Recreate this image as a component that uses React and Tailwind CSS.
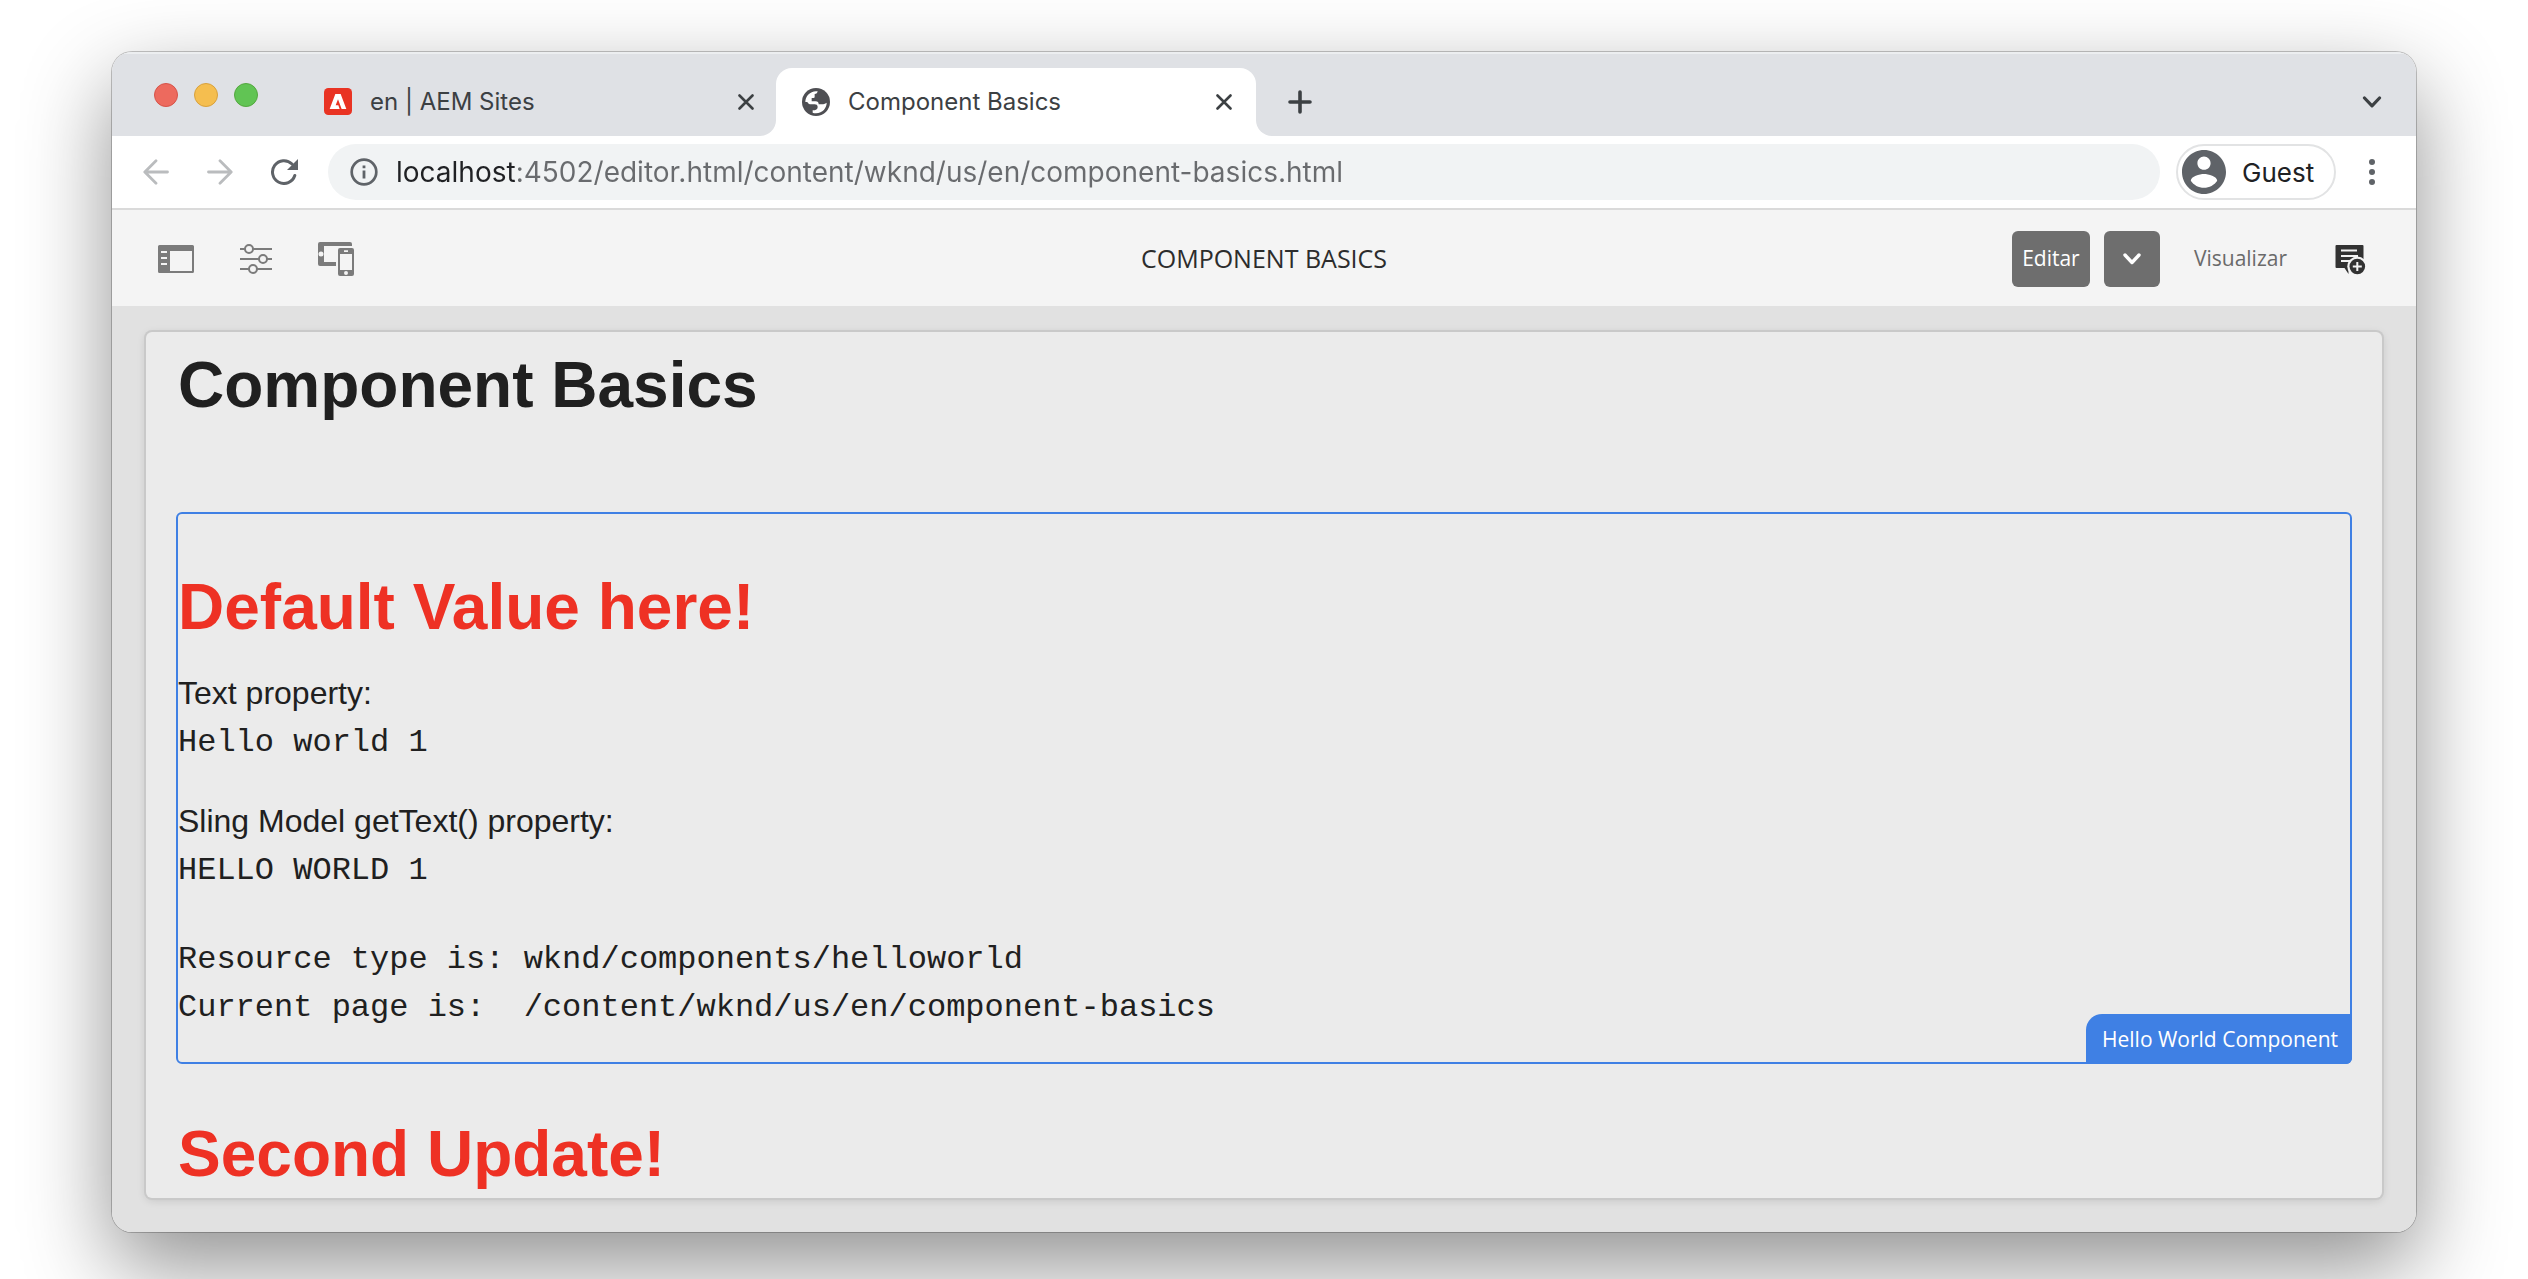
function CloseIcon() {
  return (
    <svg className="size-4" viewBox="0 0 16 16" fill="none" stroke="#3c4043" strokeWidth="2.6" strokeLinecap="round" aria-hidden="true">
      <path d="M1.5 1.5l13 13M14.5 1.5l-13 13" />
    </svg>
  );
}

function AdobeIcon() {
  return (
    <svg className="size-7 shrink-0" viewBox="0 0 84 84" aria-hidden="true">
      <rect y="0" width="84" height="81" rx="13" fill="#e93323" />
      <path fill="#fff" d="M17 63 34 18h16l17 45H53L42 34l-7 18h8l4 11z" />
    </svg>
  );
}

function GlobeIcon() {
  return (
    <svg className="size-7 shrink-0" viewBox="0 0 84 84" aria-hidden="true">
      <circle cx="42" cy="42" r="42" fill="#4e4f53" />
      <path fill="#fff" d="M10 42C10 24 24 10 42 9.500l5 .5c-1 5-3 8-9 8v8c0 3-2 4-6 4h-3v10h12c6 0 9 4 9 9h10c5 0 8-2 14-5C74 60 62 75 42 75.500c-4 0-7-.5-10-1.500v-7c10 0 15-3 15-10 0-6-4-8-9-8H27c-5 0-9-3-11-7z" />
    </svg>
  );
}

function ArrowIcon({ flip }) {
  return (
    <svg className={flip ? "size-[26px] -scale-x-100" : "size-[26px]"} viewBox="0 0 26 26" fill="none" stroke="#babcbe" strokeWidth="2.8" strokeLinecap="round" strokeLinejoin="round" aria-hidden="true">
      <path d="M24.500 13H2M13 1.800 1.800 13 13 24.200" />
    </svg>
  );
}

function ReloadIcon() {
  return (
    <svg className="h-[26px] w-[27px]" viewBox="0 0 27 26" aria-hidden="true">
      <path d="M23.800 16.500A11.400 11.400 0 1 1 21 5" fill="none" stroke="#5f6368" strokeWidth="3" strokeLinecap="round" />
      <path d="M27 0v11H16z" fill="#5f6368" />
    </svg>
  );
}

function InfoIcon() {
  return (
    <svg className="size-7 shrink-0" viewBox="0 0 28 28" aria-hidden="true">
      <circle cx="14" cy="14" r="12.300" fill="none" stroke="#5f6368" strokeWidth="2.700" />
      <path d="M12.600 7.500h2.800v2.800h-2.800zM12.600 12.500h2.800v8h-2.800z" fill="#5f6368" />
    </svg>
  );
}

function AvatarIcon() {
  return (
    <svg className="size-11 shrink-0" viewBox="2 2 20 20" fill="#5f6368" aria-hidden="true">
      <path d="M12 2C6.480 2 2 6.480 2 12s4.480 10 10 10 10-4.480 10-10S17.520 2 12 2zm0 3c1.660 0 3 1.340 3 3s-1.340 3-3 3-3-1.340-3-3 1.340-3 3-3zm0 14.200c-2.500 0-4.710-1.280-6-3.220.03-1.990 4-3.080 6-3.080 1.990 0 5.970 1.090 6 3.080-1.290 1.940-3.500 3.220-6 3.220z" />
    </svg>
  );
}

function SidePanelIcon() {
  return (
    <svg className="h-7 w-9" viewBox="0 0 36 28" aria-hidden="true">
      <path fill="#7b7b7b" fillRule="evenodd" d="M1.500 0h33A1.500 1.500 0 0 1 36 1.500v25a1.500 1.500 0 0 1-1.500 1.500h-33A1.500 1.500 0 0 1 0 26.500v-25A1.500 1.500 0 0 1 1.500 0zM12 6v20h22V6zM3 6v2h6V6zm0 6v2h6v-2zm0 6v2h6v-2z" />
    </svg>
  );
}

function SlidersIcon() {
  return (
    <svg className="h-[30px] w-8" viewBox="0 0 32 30" fill="none" stroke="#7b7b7b" strokeWidth="2" aria-hidden="true">
      <path d="M0 5h5M13 5h19M0 15h19M27 15h5M0 25h9M17 25h15" />
      <circle cx="9" cy="5" r="4" />
      <circle cx="23" cy="15" r="4" />
      <circle cx="13" cy="25" r="4" />
    </svg>
  );
}

function DevicesIcon() {
  return (
    <svg className="h-[34px] w-9" viewBox="0 0 36 34" fill="#7b7b7b" fillRule="evenodd" aria-hidden="true">
      <path d="M2 0h30a2 2 0 0 1 2 2v2H6v16h12v4H2a2 2 0 0 1-2-2V2a2 2 0 0 1 2-2zm1 9.500a2.500 2.500 0 1 0 0 5 2.500 2.500 0 0 0 0-5z" />
      <path d="M22 6h12a2 2 0 0 1 2 2v24a2 2 0 0 1-2 2H22a2 2 0 0 1-2-2V8a2 2 0 0 1 2-2zm0 6v16h12V12zm4-3.800v1.800h4V8.200zm2 20.800a2 2 0 1 0 0 4 2 2 0 0 0 0-4z" />
    </svg>
  );
}

function AnnotateIcon() {
  return (
    <svg className="h-[31px] w-[31px]" viewBox="0 0 31 31" aria-hidden="true">
      <path d="M1.500 1h26A1 1 0 0 1 28.500 2v22h-15v6L9.500 24h-8a1 1 0 0 1-1-1V2a1 1 0 0 1 1-1z" fill="#323232" />
      <path d="M6 6.500h16M6 12h17M6 17h10" stroke="#f4f4f4" strokeWidth="2" />
      <circle cx="22.300" cy="22.500" r="10" fill="#f4f4f4" />
      <circle cx="22.300" cy="22.500" r="7.800" fill="#323232" />
      <path d="M22.300 18v9M17.800 22.500h9" stroke="#f4f4f4" strokeWidth="2" />
    </svg>
  );
}

function TabStrip() {
  return (
    <div className="flex h-[84px] bg-[#dfe1e5] text-2xl text-[#3c4043] shadow-[inset_0_2px_0_#eceef0]">
      <div className="flex items-center gap-4 pt-0.5 pl-[42px]">
        <button aria-label="Close window" className="size-6 rounded-full border border-[#d65349] bg-[#ed6a5e]" />
        <button aria-label="Minimize window" className="size-6 rounded-full border border-[#d8a13d] bg-[#f5be4f]" />
        <button aria-label="Zoom window" className="size-6 rounded-full border border-[#54a73f] bg-[#61c454]" />
      </div>
      <div className="flex grow items-stretch pt-4" role="tablist">
        <div className="flex w-[502px] items-center pr-1.5 pl-[66px]">
          <button role="tab" aria-selected="false" className="flex grow items-center gap-[18px]">
            <AdobeIcon />
            en | AEM Sites
          </button>
          <button aria-label="Close tab"><CloseIcon /></button>
        </div>
        <div className="size-4 self-end bg-white">
          <div className="size-4 rounded-br-2xl bg-[#dfe1e5]" />
        </div>
        <div className="flex w-[480px] items-center rounded-t-2xl bg-white pr-6 pl-[26px]">
          <button role="tab" aria-selected="true" className="flex grow items-center gap-[18px]">
            <GlobeIcon />
            Component Basics
          </button>
          <button aria-label="Close tab"><CloseIcon /></button>
        </div>
        <div className="size-4 self-end bg-white">
          <div className="size-4 rounded-bl-2xl bg-[#dfe1e5]" />
        </div>
        <button aria-label="New tab" className="ml-4">
          <svg className="size-6" viewBox="0 0 24 24" fill="none" stroke="#3c4043" strokeWidth="3.6" strokeLinecap="round" aria-hidden="true">
            <path d="M12 2v20M2 12h20" />
          </svg>
        </button>
        <button aria-label="Search tabs" className="mr-[34px] ml-auto">
          <svg className="h-3 w-5" viewBox="0 0 20 12" fill="none" stroke="#3c4043" strokeWidth="3.2" strokeLinecap="round" strokeLinejoin="round" aria-hidden="true">
            <path d="M2.500 2 10 9.800 17.500 2" />
          </svg>
        </button>
      </div>
    </div>
  );
}

function AddressBar() {
  return (
    <div className="flex items-center border-b-2 border-[#dadada] bg-white py-2 pr-[41px] pl-[31px]">
      <div className="flex items-center gap-[38px]">
        <button aria-label="Back"><ArrowIcon /></button>
        <button aria-label="Forward"><ArrowIcon flip /></button>
        <button aria-label="Reload"><ReloadIcon /></button>
      </div>
      <div className="ml-[30px] flex h-14 grow items-center gap-[18px] rounded-full bg-[#f1f3f4] pr-6 pl-[22px]">
        <InfoIcon />
        <input
          aria-label="Address"
          defaultValue="localhost:4502/editor.html/content/wknd/us/en/component-basics.html"
          className="h-10 min-w-0 grow bg-[linear-gradient(to_right,#202124_120px,#696b6e_120px)] bg-clip-text text-[28px] text-transparent caret-black outline-none"
        />
      </div>
      <button className="ml-4 flex h-14 w-40 items-center gap-4 rounded-full border-2 border-[#e2e3e4] pl-1 text-[26px] text-[#202124]">
        <AvatarIcon />
        Guest
      </button>
      <button aria-label="Menu" className="ml-[33px]">
        <svg className="h-7 w-1.5" viewBox="0 0 6 28" fill="#5f6368" aria-hidden="true">
          <circle cx="3" cy="4" r="3" />
          <circle cx="3" cy="14" r="3" />
          <circle cx="3" cy="24" r="3" />
        </svg>
      </button>
    </div>
  );
}

function EditorToolbar() {
  return (
    <header className="grid h-24 grid-cols-[1fr_auto_1fr] items-center bg-[#f4f4f4] px-[46px] pt-0.5 font-['Open_Sans','Noto_Sans',sans-serif] text-[21px]">
      <div className="flex items-center gap-[46px]">
        <button aria-label="Toggle side panel"><SidePanelIcon /></button>
        <button aria-label="Page information"><SlidersIcon /></button>
        <button aria-label="Emulator"><DevicesIcon /></button>
      </div>
      <h1 className="text-[25px] text-[#2c2c2c]">COMPONENT BASICS</h1>
      <div className="mr-1 flex items-center justify-end">
        <button className="h-14 w-[78px] rounded-md bg-[#6e6e6e] text-white">Editar</button>
        <button aria-label="Select mode" className="ml-3.5 flex h-14 w-14 items-center justify-center rounded-md bg-[#6e6e6e]">
          <svg className="h-3 w-5" viewBox="0 0 20 12" fill="none" stroke="#fff" strokeWidth="3.4" strokeLinecap="round" strokeLinejoin="round" aria-hidden="true">
            <path d="M3 2l7 7.500L17 2" />
          </svg>
        </button>
        <button className="ml-[34px] text-[#6a6a6a]">Visualizar</button>
        <button aria-label="Annotate" className="ml-12"><AnnotateIcon /></button>
      </div>
    </header>
  );
}

export default function App() {
  return (
    <div className="min-h-screen overflow-hidden bg-white px-28 pt-[52px] pb-[47px] font-['Inter',sans-serif]">
      <div className="overflow-hidden rounded-[20px] shadow-[0_0_0_1px_rgba(0,0,0,0.22),0_34px_88px_rgba(0,0,0,0.44)]">
        <TabStrip />
        <AddressBar />
        <EditorToolbar />
        <main className="bg-[#e1e1e1] px-[34px] pt-[26px] pb-[34px] font-['Liberation_Sans',Arial,sans-serif] text-[#202020]">
          <article className="rounded-md bg-[#ebebeb] px-[30px] pt-[13px] pb-1 shadow-[0_0_0_2px_#c9c9c9,0_2px_10px_rgba(0,0,0,0.14)]">
            <h2 className="px-0.5 text-[64px] leading-[80px] font-bold">Component Basics</h2>
            <section className="relative mt-[87px] rounded-md border-2 border-[#3f80e4] pt-[53px] pb-[30px] text-[32px] leading-[48px]">
              <h2 className="text-[64px] leading-[80px] font-bold text-[#ee3124]">Default Value here!</h2>
              <p className="mt-[22px]">Text property:</p>
              <pre className="mt-0.5 font-['Liberation_Mono',monospace]">Hello world 1</pre>
              <p className="mt-[30px]">Sling Model getText() property:</p>
              <pre className="mt-0.5 font-['Liberation_Mono',monospace]">HELLO WORLD 1</pre>
              <pre className="mt-[41px] font-['Liberation_Mono',monospace]">{"Resource type is: wknd/components/helloworld\nCurrent page is:  /content/wknd/us/en/component-basics"}</pre>
              <span className="absolute -right-0.5 -bottom-0.5 flex h-[50px] items-center rounded-tl-2xl rounded-br-md bg-[#3f80e4] pr-3.5 pl-4 font-['Open_Sans','Noto_Sans',sans-serif] text-[21px] text-white">
                Hello World Component
              </span>
            </section>
            <h2 className="mt-[50px] px-0.5 text-[64px] leading-[80px] font-bold text-[#ee3124]">Second Update!</h2>
          </article>
        </main>
      </div>
    </div>
  );
}
